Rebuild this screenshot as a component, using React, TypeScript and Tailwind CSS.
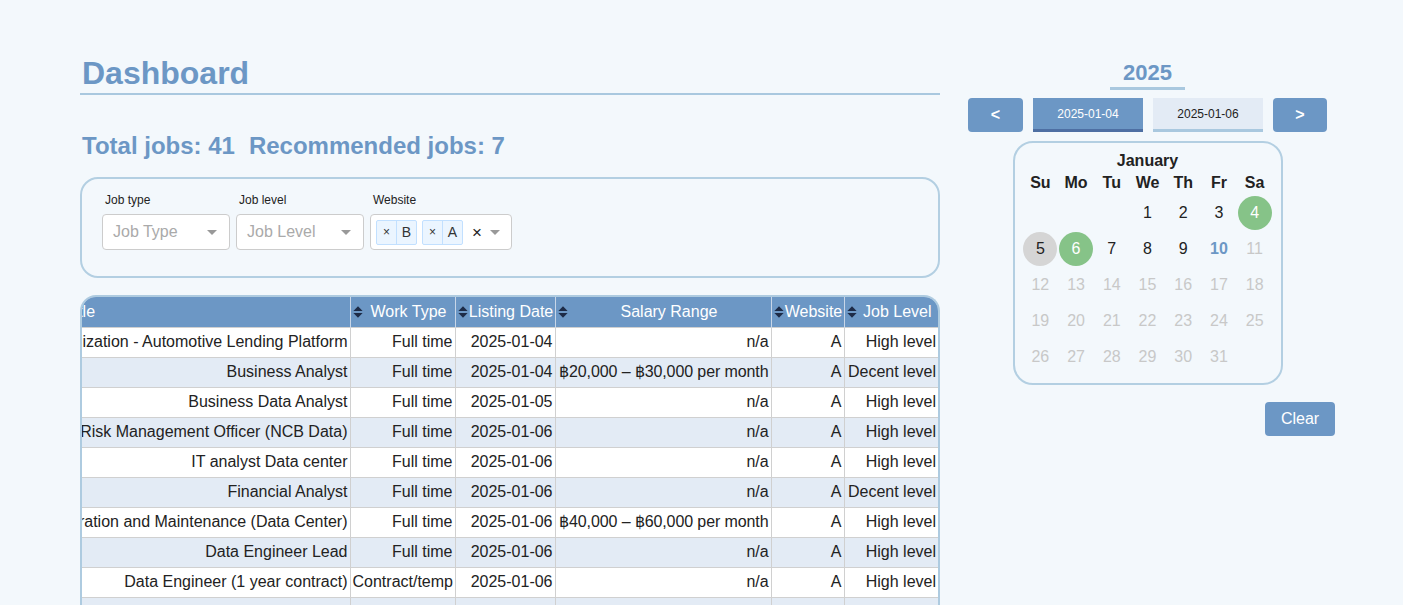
import { useLayoutEffect, useRef } from 'react';

const jobs = [
  { title: 'Senior Specialist, Data Visualization - Automotive Lending Platform', type: 'Full time', date: '2025-01-04', salary: 'n/a', site: 'A', level: 'High level' },
  { title: 'Business Analyst', type: 'Full time', date: '2025-01-04', salary: '฿20,000 – ฿30,000 per month', site: 'A', level: 'Decent level' },
  { title: 'Business Data Analyst', type: 'Full time', date: '2025-01-05', salary: 'n/a', site: 'A', level: 'High level' },
  { title: 'Senior Risk Management Officer (NCB Data)', type: 'Full time', date: '2025-01-06', salary: 'n/a', site: 'A', level: 'High level' },
  { title: 'IT analyst Data center', type: 'Full time', date: '2025-01-06', salary: 'n/a', site: 'A', level: 'High level' },
  { title: 'Financial Analyst', type: 'Full time', date: '2025-01-06', salary: 'n/a', site: 'A', level: 'Decent level' },
  { title: 'Engineer, Operation and Maintenance (Data Center)', type: 'Full time', date: '2025-01-06', salary: '฿40,000 – ฿60,000 per month', site: 'A', level: 'High level' },
  { title: 'Data Engineer Lead', type: 'Full time', date: '2025-01-06', salary: 'n/a', site: 'A', level: 'High level' },
  { title: 'Data Engineer (1 year contract)', type: 'Contract/temp', date: '2025-01-06', salary: 'n/a', site: 'A', level: 'High level' },
  { title: 'Data Analyst', type: 'Full time', date: '2025-01-06', salary: 'n/a', site: 'B', level: 'High level' },
  { title: 'Data Scientist', type: 'Full time', date: '2025-01-06', salary: 'n/a', site: 'B', level: 'High level' },
];

const columns = [
  { name: 'Title', w: 'w-[551px] border-l-0' },
  { name: 'Work Type', w: 'w-[105px]' },
  { name: 'Listing Date', w: 'w-[100px]' },
  { name: 'Salary Range', w: 'w-[216px]' },
  { name: 'Website', w: 'w-[73px]' },
  { name: 'Job Level', w: 'w-[94px] border-r-0' },
];
const dayNames = ['Su', 'Mo', 'Tu', 'We', 'Th', 'Fr', 'Sa'];

function SortIcon() {
  return (
    <svg width="10" height="12" viewBox="0 0 10 12" className="absolute left-[2px] top-[9px]">
      <path d="M5 0.3 L9.6 5 H0.4 Z" fill="#1d2b47" />
      <path d="M0.4 7 H9.6 L5 11.7 Z" fill="#1d2b47" />
    </svg>
  );
}

function Caret() {
  return <span className="block h-0 w-0 border-x-[5px] border-t-[5px] border-x-transparent border-t-[#999]" />;
}

function Chip({ label }: { label: string }) {
  return (
    <div className="flex h-[25px] items-stretch rounded-[2px] border border-[#c2e0ff] bg-[#ebf5ff] text-[#333]">
      <span className="flex w-[20px] items-center justify-center border-r border-[#c2e0ff] text-[12px]">×</span>
      <span className="flex w-[19px] items-center justify-center text-[14px]">{label}</span>
    </div>
  );
}

function DayCell({ day }: { day: number | null }) {
  if (day === null) return <div className="h-[36px]" />;
  let cls = 'text-[#c8c8c8]';
  if (day <= 9) cls = 'text-[#222]';
  if (day === 4 || day === 6) cls = 'bg-[#86c388] text-white';
  if (day === 5) cls = 'bg-[#d5d5d5] text-[#222]';
  if (day === 10) cls = 'text-[#6c97c5] font-bold';
  return (
    <div className="flex h-[36px] items-center justify-center">
      <span className={`flex h-[34px] w-[34px] items-center justify-center rounded-full text-[16px] ${cls}`}>{day}</span>
    </div>
  );
}

export default function App() {
  const scrollRef = useRef<HTMLDivElement>(null);

  useLayoutEffect(() => {
    const el = scrollRef.current;
    if (el) el.scrollLeft = el.scrollWidth;
  }, []);

  const days: (number | null)[] = [null, null, null];
  for (let d = 1; d <= 31; d++) days.push(d);

  return (
    <div className="h-screen overflow-hidden bg-[#f3f8fc] font-['Liberation_Sans',Arial,sans-serif] text-[#222]">
      <div className="flex gap-[20px] pl-[80px] pt-[57px]">
        {/* left column */}
        <div className="w-[860px]">
          <h1 className="border-b-2 border-[#a9c8df] pb-[4px] pl-[2px] text-[32px] font-bold leading-[32px] text-[#6c97c5]">
            Dashboard
          </h1>
          <div className="mt-[39px] flex gap-[14px] pl-[2px] text-[24px] font-bold leading-[24px] text-[#6c97c5]">
            <span>Total jobs: 41</span>
            <span>Recommended jobs: 7</span>
          </div>

          <div className="mt-[19px] rounded-[18px] border-2 border-[#b3cfe2] pb-[26px] pl-[20px] pt-[14px]">
            <div className="flex gap-[6px]">
              <div className="w-[128px]">
                <div className="mb-[7px] pl-[3px] text-[12px] leading-[14px]">Job type</div>
                <div className="flex h-[36px] items-center justify-between rounded-[4px] border border-[#ccc] bg-white pl-[10px] pr-[12px]">
                  <span className="text-[16px] text-[#aaa]">Job Type</span>
                  <Caret />
                </div>
              </div>
              <div className="w-[128px]">
                <div className="mb-[7px] pl-[3px] text-[12px] leading-[14px]">Job level</div>
                <div className="flex h-[36px] items-center justify-between rounded-[4px] border border-[#ccc] bg-white pl-[10px] pr-[12px]">
                  <span className="text-[16px] text-[#aaa]">Job Level</span>
                  <Caret />
                </div>
              </div>
              <div className="w-[142px]">
                <div className="mb-[7px] pl-[3px] text-[12px] leading-[14px]">Website</div>
                <div className="flex h-[36px] items-center rounded-[4px] border border-[#ccc] bg-white pl-[5px] pr-[11px]">
                  <div className="flex gap-[5px]">
                    <Chip label="B" />
                    <Chip label="A" />
                  </div>
                  <span className="ml-[9px] text-[17px] leading-none text-[#222]">×</span>
                  <span className="ml-auto">
                    <Caret />
                  </span>
                </div>
              </div>
            </div>
          </div>

          <div ref={scrollRef} className="mt-[17px] overflow-x-auto rounded-t-[16px] border-2 border-b-0 border-[#aecbe0]">
            <table className="w-[1139px] table-fixed border-collapse whitespace-nowrap text-[16px]">
              <thead>
                <tr className="h-[30px] bg-[#6c97c5] text-white">
                  {columns.map((c) => (
                    <th key={c.name} className={`relative border-x border-[#c8d6e8] pl-[13px] pr-[1px] text-center font-normal ${c.w}`}>
                      <SortIcon />
                      {c.name}
                    </th>
                  ))}
                </tr>
              </thead>
              <tbody>
                {jobs.map((j, i) => (
                  <tr key={i} className={`h-[30px] ${i % 2 === 0 ? 'bg-white' : 'bg-[#e3ebf5]'}`}>
                    {[j.title, j.type, j.date, j.salary, j.site, j.level].map((v, k) => (
                      <td
                        key={k}
                        className={`overflow-hidden border border-[#d0d0d0] px-[2px] text-right ${k === 0 ? 'border-l-0' : ''} ${k === 3 ? 'tracking-[-0.1px]' : ''} ${k === 5 ? 'border-r-0' : ''}`}
                      >
                        {v}
                      </td>
                    ))}
                  </tr>
                ))}
              </tbody>
            </table>
          </div>
        </div>

        {/* right column */}
        <div className="flex w-[375px] flex-col items-center">
          <div className="mt-[5px] w-[75px] border-b-[3px] border-[#a9c8df] pb-[3px] text-center text-[22px] font-bold leading-[22px] text-[#6c97c5]">
            2025
          </div>
          <div className="mt-[8px] flex gap-[10px]">
            <button className="h-[34px] w-[55px] rounded-[4px] bg-[#6c97c5] text-[16px] font-bold text-white">&lt;</button>
            <button className="h-[34px] w-[110px] border-b-[3px] border-[#4e6fa3] bg-[#6c97c5] text-[12px] text-white">2025-01-04</button>
            <button className="h-[34px] w-[110px] border-b-[3px] border-[#a9c8df] bg-[#e3ebf5] text-[12px] text-[#222]">2025-01-06</button>
            <button className="h-[34px] w-[54px] rounded-[4px] bg-[#6c97c5] text-[16px] font-bold text-white">&gt;</button>
          </div>

          <div className="mt-[9px] w-[270px] rounded-[20px] border-2 border-[#b3cfe2] px-[8px] pb-[8px] pt-[9px]">
            <div className="text-center text-[16px] font-bold leading-[18px]">January</div>
            <div className="mt-[4px] grid grid-cols-7 text-center text-[16px] font-bold leading-[18px]">
              {dayNames.map((d) => (
                <div key={d}>{d}</div>
              ))}
            </div>
            <div className="mt-[3px] grid grid-cols-7">
              {days.map((d, i) => (
                <DayCell key={i} day={d} />
              ))}
            </div>
          </div>

          <div className="mt-[17px] flex w-full justify-end">
            <button className="h-[34px] w-[70px] rounded-[4px] bg-[#6c97c5] text-[16px] text-white">Clear</button>
          </div>
        </div>
      </div>
    </div>
  );
}
